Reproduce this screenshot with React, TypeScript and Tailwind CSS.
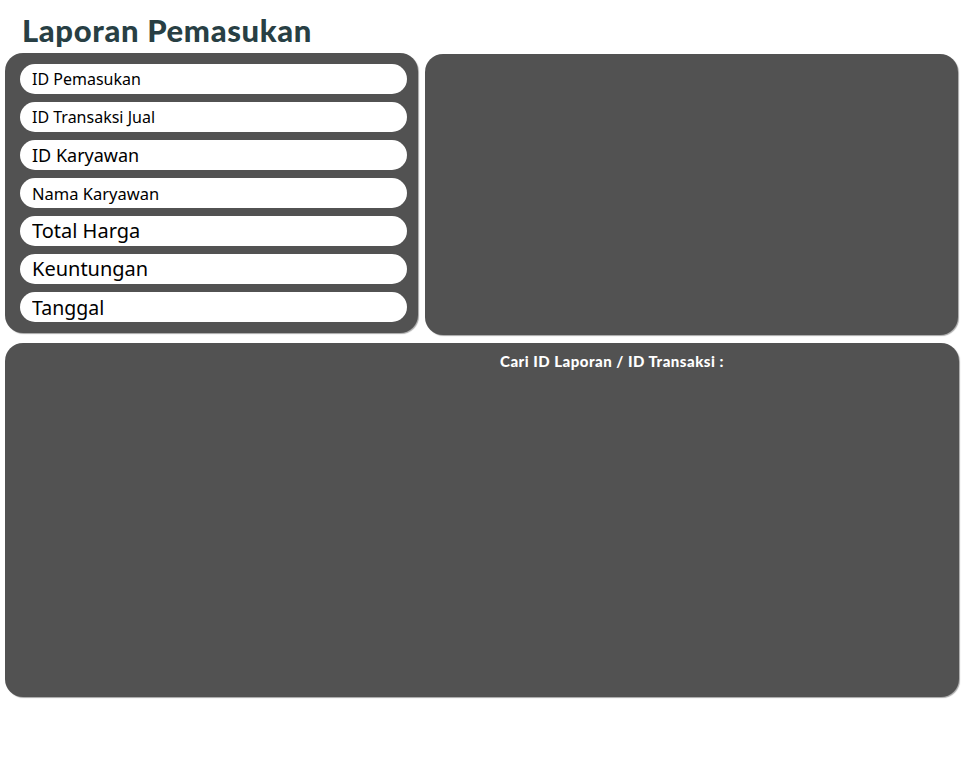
import React from "react";

const fields = [
  { label: "ID Pemasukan", size: "text-[16px]" },
  { label: "ID Transaksi Jual", size: "text-[16px]" },
  { label: "ID Karyawan", size: "text-[18px]" },
  { label: "Nama Karyawan", size: "text-[16.5px]" },
  { label: "Total Harga", size: "text-[20px]" },
  { label: "Keuntungan", size: "text-[20px]" },
  { label: "Tanggal", size: "text-[19.5px]" },
];

const App = () => {
  return (
    <div className="w-[973px] h-[768px] bg-white px-[5px] font-['Noto_Sans',sans-serif]">
      <h1 className="pl-[17px] pt-[11px] h-[53px] text-[31px] leading-[38px] font-black text-[#283f44] font-['Lato',sans-serif] tracking-[0.65px]">
        Laporan Pemasukan
      </h1>

      <div className="flex gap-[7px]">
        {/* form fields */}
        <div className="w-[413px] h-[280px] bg-[#525252] rounded-[18px] shadow-[1px_1px_1px_rgba(0,0,0,0.35)] pt-[11px] pl-[15px] pr-[11px] flex flex-col gap-[8px]">
          {fields.map((f) => (
            <input
              key={f.label}
              placeholder={f.label}
              className={`h-[30px] w-full rounded-[15px] bg-white pl-[12px] text-black placeholder:text-black outline-none ${f.size}`}
            />
          ))}
        </div>

        {/* preview */}
        <div className="flex-1 mr-[10px] mt-[1px] h-[281px] bg-[#525252] rounded-[18px] shadow-[1px_1px_1px_rgba(0,0,0,0.35)]" />
      </div>

      <div className="mt-[8px] w-[954px] h-[354px] bg-[#525252] rounded-[18px] shadow-[1px_1px_1px_rgba(0,0,0,0.35)] pt-[7px] pl-[495px]">
        <p className="text-white text-[15px] font-black font-['Lato',sans-serif] tracking-[0.5px]">
          Cari ID Laporan / ID Transaksi :
        </p>
      </div>
    </div>
  );
};

export default App;
